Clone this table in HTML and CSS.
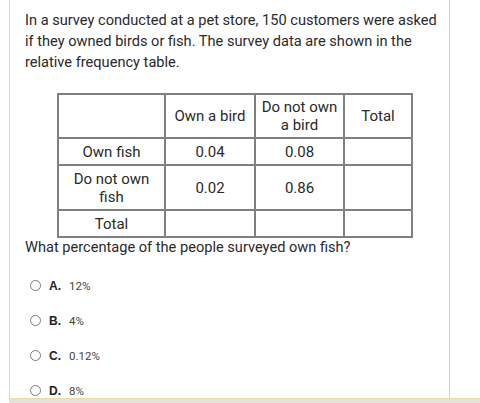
FILE: index.html
```html
<!DOCTYPE html>
<html>
<head>
<meta charset="utf-8">
<link rel="stylesheet" href="styles.css">
</head>
<body>
<div class="page">
  <div class="card">
    <div class="content">
      <p class="stem">In a survey conducted at a pet store, 150 customers were asked if they owned birds or fish. The survey data are shown in the relative frequency table.</p>
      <div class="table">
        <div class="cell"></div>
        <div class="cell">Own a bird</div>
        <div class="cell">Do not own<br>a bird</div>
        <div class="cell">Total</div>
        <div class="cell">Own fish</div>
        <div class="cell">0.04</div>
        <div class="cell">0.08</div>
        <div class="cell"></div>
        <div class="cell">Do not own<br>fish</div>
        <div class="cell">0.02</div>
        <div class="cell">0.86</div>
        <div class="cell"></div>
        <div class="cell">Total</div>
        <div class="cell"></div>
        <div class="cell"></div>
        <div class="cell"></div>
      </div>
      <p class="question">What percentage of the people surveyed own fish?</p>
      <ul class="options">
        <li class="option"><span class="radio"></span><span class="letter">A.</span><span class="answer">12%</span></li>
        <li class="option"><span class="radio"></span><span class="letter">B.</span><span class="answer">4%</span></li>
        <li class="option"><span class="radio"></span><span class="letter">C.</span><span class="answer">0.12%</span></li>
        <li class="option"><span class="radio"></span><span class="letter">D.</span><span class="answer">8%</span></li>
      </ul>
    </div>
  </div>
  <div class="footer"></div>
</div>
</body>
</html>
```
FILE: styles.css
```css
html, body {
  margin: 0;
  padding: 0;
  background: #ffffff;
  font-family: Roboto, "Liberation Sans", sans-serif;
  overflow: hidden;
}
.page {
  margin-left: 9px;
  width: 471px;
}
.card {
  height: 398px;
  border-left: 1px solid #eedba4;
  box-sizing: border-box;
  overflow: hidden;
}
.content {
  width: 440px;
  height: 398px;
  box-sizing: border-box;
  border-right: 1px solid #d2d2d2;
  padding: 10px 0 0 15px;
  overflow: hidden;
}
.stem {
  margin: 0;
  font-size: 14.6px;
  line-height: 21px;
  color: #2a2a2a;
  width: 420px;
}
.table {
  margin: 20px 0 0 32px;
  display: grid;
  grid-template-columns: 105px 88px 87px 66px;
  grid-template-rows: 42px 25px 43px 25px;
  gap: 2px;
  padding: 2px;
  background: #808080;
  width: max-content;
}
.cell {
  background: #fff;
  display: flex;
  align-items: center;
  justify-content: center;
  text-align: center;
  font-size: 15px;
  line-height: 18px;
  color: #2a2a2a;
}
.question {
  margin: 0;
  font-size: 14.6px;
  line-height: 18px;
  color: #2a2a2a;
}
.options {
  list-style: none;
  margin: 12px 0 0 0;
  padding: 0 0 0 5px;
}
.option {
  height: 35px;
  display: flex;
  align-items: center;
  font-size: 11.5px;
  color: #444;
}
.radio {
  width: 11px;
  height: 11px;
  box-sizing: border-box;
  border: 1.5px solid #7a7a7a;
  border-radius: 50%;
  margin-right: 8px;
}
.letter {
  font-family: "Liberation Sans", Arial, sans-serif;
  font-size: 12px;
  font-weight: 700;
  color: #222;
  width: 20px;
}
.footer {
  height: 5px;
  border-top: 1px solid #eedba4;
  background: #e4e1da;
}
```
